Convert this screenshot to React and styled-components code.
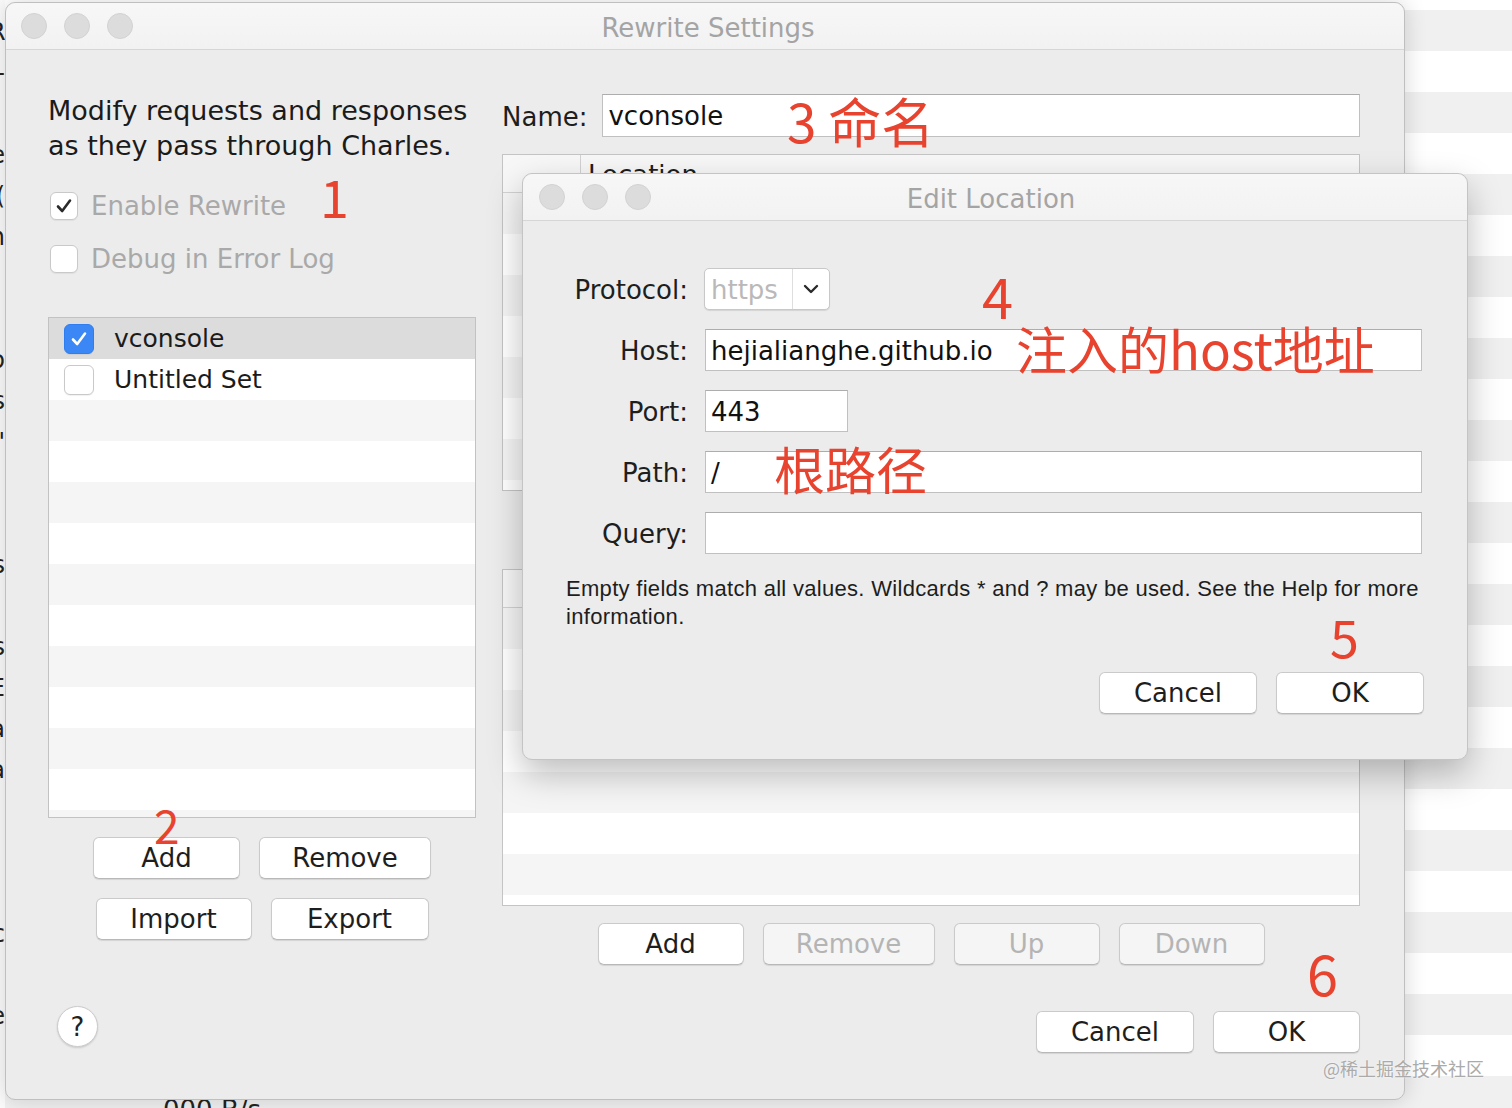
import React from "react";
import styled, { createGlobalStyle } from "styled-components";

const GlobalStyle = createGlobalStyle`
  html, body { margin: 0; padding: 0; }
  body {
    width: 1512px;
    height: 1108px;
    overflow: hidden;
    font-family: "DejaVu Sans", "Noto Sans", sans-serif;
    color: #1e1e1e;
  }
`;

const UI_FONT = `"DejaVu Sans", "Noto Sans", sans-serif`;
const CJK_FONT = `"Noto Sans CJK SC", "Noto Sans", sans-serif`;

const Page = styled.div`
  position: relative;
  display: flex;
  align-items: flex-start;
  width: 1512px;
  height: 1108px;
  overflow: hidden;
  background-color: #ffffff;
  background-image: linear-gradient(180deg, #f0f0f0 0 41px, #ffffff 41px 82px);
  background-size: 100% 82px;
  background-position: 0 10px;
  background-repeat: repeat-y;
`;

const LeftEdge = styled.div`
  flex: 0 0 5px;
  height: 100%;
  overflow: hidden;
  background: #fbfbfb;
`;

const EdgeText = styled.div`
  width: 16px;
  margin-left: -11px;
  padding-top: 12px;
  text-align: right;
  font: 24px/41px ${UI_FONT};
  color: #222;
  white-space: pre;
`;

const BackText = styled.div`
  position: absolute;
  left: 163px;
  top: 1097px;
  z-index: 0;
  font: 26px/1 ${UI_FONT};
  color: #222;
`;

const Window = styled.div`
  position: relative;
  z-index: 1;
  flex: 0 0 1400px;
  height: 1098px;
  margin-top: 2px;
  box-sizing: border-box;
  border: 1px solid #bfbfbf;
  border-radius: 10px;
  background: #ececec;
  box-shadow: 0 0 22px rgba(0, 0, 0, 0.16);
`;

const TitleBar = styled.div`
  display: grid;
  grid-template-columns: 1fr auto 1fr;
  align-items: center;
  height: 46px;
  padding-left: ${(p) => p.$pad}px;
  border-bottom: 1px solid #d6d6d6;
  border-radius: 10px 10px 0 0;
  background: linear-gradient(#f7f7f7, #f2f2f2);
`;

const Lights = styled.div`
  display: flex;
  gap: 17px;
`;

const Light = styled.span`
  width: 26px;
  height: 26px;
  border-radius: 50%;
  box-sizing: border-box;
  background: #dcdcdc;
  border: 1px solid #d2d2d2;
`;

const Title = styled.div`
  padding-top: 3px;
  font: 26px ${UI_FONT};
  color: #a4a4a4;
  margin-left: ${(p) => p.$shift || 0}px;
`;

const Body = styled.div`
  display: flex;
  gap: 26px;
  padding: 44px 0 0 42px;
`;

const LeftPane = styled.div`
  display: flex;
  flex-direction: column;
  width: 428px;
`;

const Description = styled.p`
  margin: -1px 0 0;
  font: 27px/35px ${UI_FONT};
  color: #1b1b1b;
`;

const CheckRow = styled.label`
  display: flex;
  align-items: center;
  gap: 13px;
  height: 40px;
  margin-top: ${(p) => p.$mt}px;
  margin-left: 2px;
  font: 26px ${UI_FONT};
  color: #a9a9a9;
`;

const Box = styled.span`
  display: flex;
  align-items: center;
  justify-content: center;
  box-sizing: border-box;
  flex: 0 0 ${(p) => p.$size}px;
  height: ${(p) => p.$size}px;
  border-radius: 6px;
  border: 1px solid ${(p) => (p.$blue ? "#2f7ef0" : "#c9c9c9")};
  background: ${(p) => (p.$blue ? "#3b87f6" : "#fff")};
  box-shadow: 0 1px 1px rgba(0, 0, 0, 0.06);
`;

const CheckMark = ({ color }) => (
  <svg width="20" height="20" viewBox="0 0 20 20">
    <path
      d="M4 10.5 L8.2 15 L16 4.5"
      fill="none"
      stroke={color}
      strokeWidth="2.6"
      strokeLinecap="round"
      strokeLinejoin="round"
    />
  </svg>
);

const Checkbox = ({ checked, blue, size }) => (
  <Box $size={size} $blue={blue}>
    {checked && <CheckMark color={blue ? "#fff" : "#2a2a2a"} />}
  </Box>
);

const List = styled.div`
  height: 501px;
  margin-top: 38px;
  box-sizing: border-box;
  border: 1px solid #c2c2c2;
  background: #fff;
  overflow: hidden;
`;

const ListRow = styled.div`
  display: flex;
  align-items: center;
  gap: 20px;
  height: 41px;
  padding-left: 15px;
  background: ${(p) => (p.$selected ? "#dcdcdc" : p.$alt ? "#f5f5f5" : "#fff")};
  font: 25px ${UI_FONT};
  color: #1b1b1b;
`;

const ButtonRow = styled.div`
  display: flex;
  justify-content: ${(p) => p.$justify || "center"};
  gap: 19px;
  margin-top: ${(p) => p.$mt}px;
  margin-right: ${(p) => p.$mr || 0}px;
`;

const Button = styled.button`
  box-sizing: border-box;
  width: ${(p) => p.$w}px;
  height: 42px;
  padding: 0;
  border: 1px solid #cacaca;
  border-bottom-color: #b8b8b8;
  border-radius: 6px;
  background: ${(p) => (p.disabled ? "#f5f5f5" : "#fff")};
  color: ${(p) => (p.disabled ? "#b4b4b4" : "#1e1e1e")};
  box-shadow: 0 1px 1px rgba(0, 0, 0, 0.1);
  font: 26px ${UI_FONT};
`;

const HelpButton = styled.button`
  width: 41px;
  height: 41px;
  margin: 66px 0 0 9px;
  padding: 0;
  border-radius: 50%;
  border: 1px solid #cbcbcb;
  background: #fff;
  box-shadow: 0 1px 2px rgba(0, 0, 0, 0.15);
  font: 26px ${UI_FONT};
  color: #222;
`;

const RightPane = styled.div`
  display: flex;
  flex-direction: column;
  width: 858px;
`;

const NameRow = styled.div`
  display: flex;
  align-items: center;
  gap: 15px;
  height: 43px;
`;

const Label = styled.span`
  font: 26px ${UI_FONT};
  color: #1e1e1e;
  text-align: right;
  white-space: nowrap;
  padding-top: 2px;
`;

const Field = styled.div`
  box-sizing: border-box;
  flex: 1;
  width: ${(p) => (p.$w ? `${p.$w}px` : "auto")};
  height: ${(p) => p.$h || 42}px;
  padding: 2px 0 0 5px;
  border: 1px solid #c0c0c0;
  border-top-color: #adadad;
  background: #fff;
  font: 26px/${(p) => (p.$h || 42) - 4}px ${UI_FONT};
  color: #111;
  white-space: nowrap;
  overflow: hidden;
`;

const Table = styled.div`
  height: 337px;
  margin-top: ${(p) => p.$mt}px;
  box-sizing: border-box;
  border: 1px solid #c4c4c4;
  background: #fff;
  overflow: hidden;
`;

const TableHead = styled.div`
  display: grid;
  grid-template-columns: 77px 1fr;
  height: 37px;
  border-bottom: 1px solid #d2d2d2;
  background: #f7f7f7;
`;

const HeadCell = styled.div`
  padding-left: 7px;
  border-left: ${(p) => (p.$divider ? "1px solid #d2d2d2" : "none")};
  font: 26px/40px ${UI_FONT};
  color: #1e1e1e;
`;

const TableRow = styled.div`
  height: 41px;
  background: ${(p) => (p.$alt ? "#f5f5f5" : "#fff")};
`;

const Dialog = styled.div`
  position: absolute;
  left: 522px;
  top: 173px;
  z-index: 2;
  width: 946px;
  height: 587px;
  box-sizing: border-box;
  border: 1px solid #c4c4c4;
  border-radius: 10px;
  background: #ececec;
  box-shadow: 0 14px 34px rgba(0, 0, 0, 0.26);
`;

const DialogBody = styled.div`
  padding: 47px 45px 0 43px;
`;

const FormGrid = styled.div`
  display: grid;
  grid-template-columns: 122px 1fr;
  grid-auto-rows: 42px;
  column-gap: 17px;
  row-gap: 19px;
  align-items: center;
`;

const Select = styled.div`
  display: flex;
  box-sizing: border-box;
  width: 126px;
  height: 42px;
  margin-left: -1px;
  border: 1px solid #c8c8c8;
  border-radius: 5px;
  background: #fff;
  box-shadow: 0 1px 1px rgba(0, 0, 0, 0.1);
`;

const SelectValue = styled.span`
  flex: 0 0 88px;
  padding: 2px 0 0 6px;
  box-sizing: border-box;
  border-right: 1px solid #dedede;
  font: 26px/38px ${UI_FONT};
  color: #b9b9b9;
`;

const SelectArrow = styled.span`
  flex: 1;
  display: flex;
  align-items: center;
  justify-content: center;
`;

const HelpText = styled.p`
  margin: 21px 0 0;
  font: 22px/28px "Liberation Sans", Arial, sans-serif;
  letter-spacing: 0.3px;
  color: #1e1e1e;
  white-space: nowrap;
`;

const Note = styled.span`
  position: absolute;
  left: ${(p) => p.$x}px;
  top: ${(p) => p.$y}px;
  z-index: 3;
  font-family: ${CJK_FONT};
  font-size: ${(p) => p.$size || 52}px;
  line-height: 1;
  color: #e8432f;
  white-space: nowrap;
`;

const Watermark = styled.span`
  position: absolute;
  left: 1323px;
  top: 1059px;
  z-index: 3;
  font: 18px/1 ${CJK_FONT};
  color: #aaaaaa;
  text-shadow: 0 0 2px #fff;
`;

const edgeChars = ["R", "-", " ", "e", "(", "n", " ", " ", "o", "s", "'", " ", " ", "s", " ", "s", "E", "a", "a", " ", " ", " ", "c", " ", "e", " "];

const Rows = ({ count, start = 0, Row }) =>
  Array.from({ length: count }, (_, i) => <Row key={i} $alt={(i + start) % 2 === 0} />);

const LocationTable = ({ mt }) => (
  <Table $mt={mt}>
    <TableHead>
      <HeadCell />
      <HeadCell $divider>Location</HeadCell>
    </TableHead>
    <Rows count={8} Row={TableRow} />
  </Table>
);

const TrafficLights = () => (
  <Lights>
    <Light />
    <Light />
    <Light />
  </Lights>
);

const App = () => {
  return (
    <Page>
      <GlobalStyle />
      <LeftEdge>
        <EdgeText>{edgeChars.join("\n")}</EdgeText>
      </LeftEdge>
      <BackText>000 B/s</BackText>

      <Window>
        <TitleBar $pad={15}>
          <TrafficLights />
          <Title $shift={-9}>Rewrite Settings</Title>
          <span />
        </TitleBar>

        <Body>
          <LeftPane>
            <Description>
              Modify requests and responses
              <br />
              as they pass through Charles.
            </Description>
            <CheckRow $mt={23}>
              <Checkbox checked size={28} />
              Enable Rewrite
            </CheckRow>
            <CheckRow $mt={13}>
              <Checkbox size={28} />
              Debug in Error Log
            </CheckRow>

            <List>
              <ListRow $selected>
                <Checkbox checked blue size={30} />
                vconsole
              </ListRow>
              <ListRow>
                <Checkbox size={30} />
                Untitled Set
              </ListRow>
              {Array.from({ length: 11 }, (_, i) => (
                <ListRow key={i} $alt={i % 2 === 0} />
              ))}
            </List>

            <ButtonRow $mt={19}>
              <Button $w={147}>Add</Button>
              <Button $w={172}>Remove</Button>
            </ButtonRow>
            <ButtonRow $mt={19}>
              <Button $w={156}>Import</Button>
              <Button $w={158}>Export</Button>
            </ButtonRow>

            <HelpButton>?</HelpButton>
          </LeftPane>

          <RightPane>
            <NameRow>
              <Label>Name:</Label>
              <Field $h={43}>vconsole</Field>
            </NameRow>

            <LocationTable mt={17} />
            <LocationTable mt={78} />

            <ButtonRow $mt={17}>
              <Button $w={146}>Add</Button>
              <Button $w={172} disabled>
                Remove
              </Button>
              <Button $w={146} disabled>
                Up
              </Button>
              <Button $w={146} disabled>
                Down
              </Button>
            </ButtonRow>

            <ButtonRow $mt={46} $justify="flex-end">
              <Button $w={158}>Cancel</Button>
              <Button $w={147}>OK</Button>
            </ButtonRow>
          </RightPane>
        </Body>
      </Window>

      <Dialog>
        <TitleBar $pad={16}>
          <TrafficLights />
          <Title $shift={-24}>Edit Location</Title>
          <span />
        </TitleBar>
        <DialogBody>
          <FormGrid>
            <Label>Protocol:</Label>
            <Select>
              <SelectValue>https</SelectValue>
              <SelectArrow>
                <svg width="16" height="10" viewBox="0 0 16 10">
                  <path
                    d="M2 2 L8 8 L14 2"
                    fill="none"
                    stroke="#2a2a2a"
                    strokeWidth="2.4"
                    strokeLinecap="round"
                    strokeLinejoin="round"
                  />
                </svg>
              </SelectArrow>
            </Select>

            <Label>Host:</Label>
            <Field>hejialianghe.github.io</Field>

            <Label>Port:</Label>
            <Field $w={143}>443</Field>

            <Label>Path:</Label>
            <Field>/</Field>

            <Label>Query:</Label>
            <Field />
          </FormGrid>

          <HelpText>
            Empty fields match all values. Wildcards * and ? may be used. See the Help for more
            <br />
            information.
          </HelpText>

          <ButtonRow $mt={41} $justify="flex-end" $mr={-2}>
            <Button $w={158}>Cancel</Button>
            <Button $w={148}>OK</Button>
          </ButtonRow>
        </DialogBody>
      </Dialog>

      <Note $x={320} $y={170}>1</Note>
      <Note $x={154} $y={801} $size={46}>2</Note>
      <Note $x={787} $y={94} $size={53}>3 命名</Note>
      <Note $x={982} $y={267} $size={56}>4</Note>
      <Note $x={1016} $y={323} $size={51}>注入的host地址</Note>
      <Note $x={774} $y={443} $size={51}>根路径</Note>
      <Note $x={1330} $y={610}>5</Note>
      <Note $x={1307} $y={944} $size={56}>6</Note>
      <Watermark>@稀土掘金技术社区</Watermark>
    </Page>
  );
};

export default App;
